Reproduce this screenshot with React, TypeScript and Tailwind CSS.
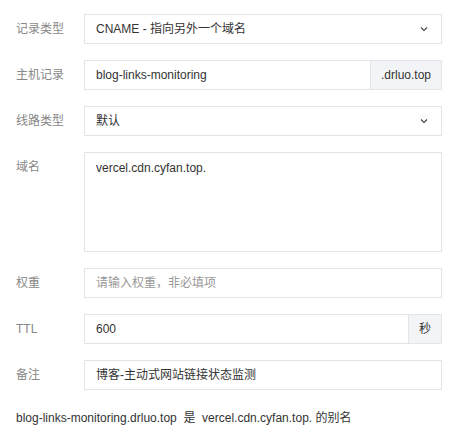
import { ReactNode } from "react";

function Chevron() {
  return (
    <svg width="10" height="10" viewBox="0 0 10 10" className="shrink-0">
      <path d="M2 3.5 L5 6.5 L8 3.5" fill="none" stroke="#444" strokeWidth="1.1" />
    </svg>
  );
}

function Row({ label, children }: { label: string; children: ReactNode }) {
  return (
    <div className="flex items-start">
      <div className="w-[68px] shrink-0 pt-[7px] text-[12px] leading-[16px] text-[#888]">{label}</div>
      <div className="w-[358px]">{children}</div>
    </div>
  );
}

export default function App() {
  return (
    <div
      className="w-[461px] h-[435px] bg-white pl-[16px] pt-[14px] text-[12px] text-[#333]"
      style={{ fontFamily: '"Liberation Sans", "Noto Sans CJK SC", sans-serif' }}
    >
      <div className="flex flex-col gap-[16px]">
        <Row label="记录类型">
          <div className="h-[30px] border border-[#e3e4e8] flex items-center justify-between pl-[11px] pr-[12px]">
            <span>CNAME - 指向另外一个域名</span>
            <Chevron />
          </div>
        </Row>
        <Row label="主机记录">
          <div className="h-[30px] border border-[#e3e4e8] flex">
            <div className="flex-1 flex items-center pl-[11px]">blog-links-monitoring</div>
            <div className="w-[71px] flex items-center justify-center bg-[#f3f4f7] border-l border-[#e3e4e8]">.drluo.top</div>
          </div>
        </Row>
        <Row label="线路类型">
          <div className="h-[30px] border border-[#e3e4e8] flex items-center justify-between pl-[11px] pr-[12px]">
            <span>默认</span>
            <Chevron />
          </div>
        </Row>
        <Row label="域名">
          <div className="h-[100px] border border-[#e3e4e8] pl-[11px] pt-[6px]">vercel.cdn.cyfan.top.</div>
        </Row>
        <Row label="权重">
          <div className="h-[30px] border border-[#e3e4e8] flex items-center pl-[11px] text-[#999]">请输入权重，非必填项</div>
        </Row>
        <Row label="TTL">
          <div className="h-[30px] border border-[#e3e4e8] flex">
            <div className="flex-1 flex items-center pl-[11px]">600</div>
            <div className="w-[33px] flex items-center justify-center bg-[#f3f4f7] border-l border-[#e3e4e8]">秒</div>
          </div>
        </Row>
        <Row label="备注">
          <div className="h-[30px] border border-[#e3e4e8] flex items-center pl-[11px]">博客-主动式网站链接状态监测</div>
        </Row>
      </div>
      <div className="mt-[20px] leading-[16px]">
        blog-links-monitoring.drluo.top&nbsp;&nbsp;是&nbsp;&nbsp;vercel.cdn.cyfan.top. 的别名
      </div>
    </div>
  );
}
